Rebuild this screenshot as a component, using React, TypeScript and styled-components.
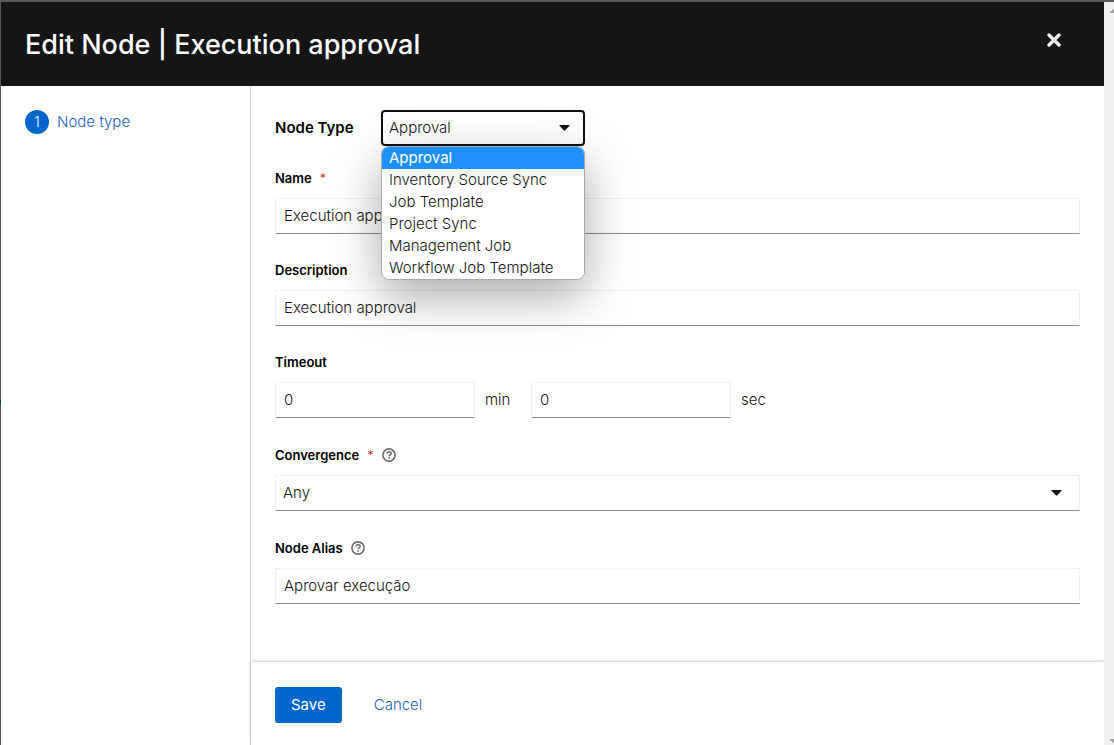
import React, { useState } from "react";
import styled, { createGlobalStyle } from "styled-components";

const GlobalStyle = createGlobalStyle`
  *, *::before, *::after { box-sizing: border-box; }
  body {
    margin: 0;
    background: #fff;
    color: #151515;
    font-family: Inter, "Liberation Sans", sans-serif;
    font-size: 15px;
    font-weight: 300;
    line-height: 24px;
  }
  button, input, select { font: inherit; color: inherit; }
`;

const Page = styled.div`
  display: flex;
  min-height: 100vh;
  border-top: 2px solid #58595a;
  border-left: 1px solid #58595a;
`;

const Wizard = styled.div`
  flex: 1;
  min-width: 0;
  display: flex;
  flex-direction: column;
`;

const Header = styled.header`
  display: flex;
  justify-content: space-between;
  align-items: flex-start;
  padding: 24px 24px 22px;
  background: #151515;
  color: #fff;
`;

const Title = styled.h1`
  margin: 0;
  font-size: 27px;
  font-weight: 500;
  line-height: 38px;
`;

const CloseButton = styled.button`
  display: flex;
  align-items: center;
  justify-content: center;
  width: 52px;
  height: 28px;
  padding: 0;
  border: 0;
  background: none;
  color: #f0f0f0;
`;

const Body = styled.div`
  flex: 1;
  display: flex;
`;

const Steps = styled.nav`
  flex: 0 0 250px;
  padding: 24px;
  border-right: 1px solid #d2d2d2;
`;

const StepList = styled.ol`
  margin: 0;
  padding: 0;
  list-style: none;
`;

const StepLink = styled.a`
  display: flex;
  align-items: center;
  gap: 8px;
  color: #1a5fc8;
  text-decoration: none;
`;

const StepNumber = styled.span`
  width: 24px;
  height: 24px;
  border-radius: 50%;
  background: #06c;
  color: #fff;
  font-size: 14px;
  text-align: center;
`;

const Form = styled.form`
  flex: 1;
  min-width: 0;
  display: flex;
  flex-direction: column;
`;

const Fields = styled.div`
  flex: 1;
  padding: 24px 24px 58px;
  display: flex;
  flex-direction: column;
  gap: 26px;
`;

const TypeRow = styled.div`
  display: flex;
  align-items: center;
  margin-bottom: -4px;
`;

const TypeLabel = styled.label`
  width: 106px;
  color: #000;
  font-weight: 600;
`;

const TypePicker = styled.div`
  position: relative;
  width: 204px;
`;

const SelectBox = styled.div`
  position: relative;
`;

const Select = styled.select<{ $open?: boolean }>`
  display: block;
  width: 100%;
  height: 36px;
  padding: 0 24px 0 ${(p) => (p.$open ? 6 : 7)}px;
  appearance: none;
  background: #fff;
  outline: 0;
  border: 1px solid #f0f0f0;
  border-bottom-color: #8a8d90;
  ${(p) => p.$open && "border: 2px solid #101010; border-radius: 4px;"}
`;

const Caret = styled.svg<{ $inset: number }>`
  position: absolute;
  top: 15px;
  right: ${(p) => p.$inset}px;
  width: 11px;
  height: 6px;
  pointer-events: none;
`;

const Options = styled.ul`
  position: absolute;
  z-index: 1;
  top: 36px;
  left: 0;
  width: 100%;
  margin: 0;
  padding: 0;
  overflow: hidden;
  list-style: none;
  line-height: 22px;
  background: #fff;
  border: 1px solid #a9a9a9;
  border-radius: 8px;
  box-shadow: 0 16px 48px rgba(0, 0, 0, 0.34);
`;

const Option = styled.li<{ $active: boolean }>`
  padding: 0 7px;
  white-space: nowrap;
  background: ${(p) => (p.$active ? "#1e90ff" : "#fff")};
  color: ${(p) => (p.$active ? "#fff" : "#151515")};
  font-weight: ${(p) => (p.$active ? 400 : 300)};
`;

const Group = styled.div`
  display: flex;
  flex-direction: column;
  gap: 10px;
`;

const LabelRow = styled.div<{ $help?: boolean }>`
  display: flex;
  align-items: center;
  gap: 8px;
  height: ${(p) => (p.$help ? 21 : 20)}px;
  color: #000;
  font-size: 13px;
  font-weight: 600;
`;

const Required = styled.span`
  color: #c9190b;
  font-weight: 300;
`;

const HelpButton = styled.button`
  display: flex;
  padding: 0;
  border: 0;
  background: none;
  color: #6a6e73;
`;

const TextInput = styled.input`
  display: block;
  width: 100%;
  height: 36px;
  padding: 0 8px 2px;
  outline: 0;
  background: #fff;
  border: 1px solid #f0f0f0;
  border-bottom-color: #8a8d90;
  border-radius: 0;
`;

const TimeoutRow = styled.div`
  display: flex;
  align-items: center;
`;

const TimeInput = styled(TextInput)`
  width: 200px;
`;

const Unit = styled.span`
  width: 56px;
  padding-left: 10px;
`;

const Footer = styled.footer`
  display: flex;
  align-items: center;
  gap: 16px;
  padding: 25px 24px 22px;
  box-shadow: 0 -1px 3px rgba(3, 3, 3, 0.2);
`;

const Button = styled.button<{ $primary?: boolean }>`
  height: 36px;
  padding: 0 16px;
  border: 0;
  border-radius: 3px;
  background: ${(p) => (p.$primary ? "#06c" : "transparent")};
  color: ${(p) => (p.$primary ? "#fff" : "#1a5fc8")};
  font-weight: ${(p) => (p.$primary ? 400 : 300)};
`;

const ScrollRail = styled.div`
  position: relative;
  display: flex;
  flex-direction: column;
  justify-content: space-between;
  align-items: flex-end;
  width: 10px;
  padding: 7px 0 2px;
  background: #f0f0f0;
`;

const EdgeMark = styled.span`
  position: absolute;
  top: 400px;
  left: 0;
  width: 1px;
  height: 4px;
  background: #123f73;
`;

const nodeTypes = [
  "Approval",
  "Inventory Source Sync",
  "Job Template",
  "Project Sync",
  "Management Job",
  "Workflow Job Template",
];

function DownCaret({ inset }: { inset: number }) {
  return (
    <Caret $inset={inset} viewBox="0 0 11 6" aria-hidden="true">
      <path d="M1 0h9q1 0 .5.8L6.5 5q-1 1-2 0L.5.8Q0 0 1 0Z" fill="#151515" />
    </Caret>
  );
}

function Help({ label }: { label: string }) {
  return (
    <HelpButton type="button" aria-label={label}>
      <svg width="14" height="14" viewBox="0 0 14 14" fill="none" stroke="currentColor">
        <circle cx="7" cy="7" r="6.1" strokeWidth="1.6" />
        <path d="M4.9 5.5C5.2 4.4 6 3.8 7.1 3.8c1.2 0 2.1.7 2.1 1.7C9.2 6.9 7.2 6.8 7.2 8.3" strokeWidth="1.5" />
        <circle cx="7.1" cy="10" r=".9" fill="currentColor" stroke="none" />
      </svg>
    </HelpButton>
  );
}

export default function App() {
  const [type, setType] = useState(nodeTypes[0]);

  return (
    <>
      <GlobalStyle />
      <Page>
        <EdgeMark />
        <Wizard>
          <Header>
            <Title>Edit Node | Execution approval</Title>
            <CloseButton type="button" aria-label="Close">
              <svg width="14" height="14" viewBox="0 0 14 14">
                <path d="M2 2l10 10M12 2L2 12" stroke="currentColor" strokeWidth="3.4" strokeLinecap="round" />
              </svg>
            </CloseButton>
          </Header>
          <Body>
            <Steps aria-label="Wizard steps">
              <StepList>
                <li>
                  <StepLink href="#node-type" aria-current="step">
                    <StepNumber>1</StepNumber>
                    Node type
                  </StepLink>
                </li>
              </StepList>
            </Steps>
            <Form onSubmit={(e) => e.preventDefault()}>
              <Fields>
                <TypeRow>
                  <TypeLabel htmlFor="node-type">Node Type</TypeLabel>
                  <TypePicker>
                    <Select id="node-type" $open value={type} onChange={(e) => setType(e.target.value)}>
                      {nodeTypes.map((t) => (
                        <option key={t}>{t}</option>
                      ))}
                    </Select>
                    <DownCaret inset={15} />
                    <Options role="listbox" aria-label="Node Type">
                      {nodeTypes.map((t) => (
                        <Option key={t} role="option" aria-selected={t === type} $active={t === type} onClick={() => setType(t)}>
                          {t}
                        </Option>
                      ))}
                    </Options>
                  </TypePicker>
                </TypeRow>
                <Group>
                  <LabelRow>
                    <label htmlFor="name">Name</label>
                    <Required aria-hidden="true">*</Required>
                  </LabelRow>
                  <TextInput id="name" required defaultValue="Execution approval" />
                </Group>
                <Group>
                  <LabelRow>
                    <label htmlFor="description">Description</label>
                  </LabelRow>
                  <TextInput id="description" defaultValue="Execution approval" />
                </Group>
                <Group>
                  <LabelRow>
                    <label htmlFor="timeout-minutes">Timeout</label>
                  </LabelRow>
                  <TimeoutRow>
                    <TimeInput id="timeout-minutes" inputMode="numeric" defaultValue="0" />
                    <Unit>min</Unit>
                    <TimeInput aria-label="Timeout seconds" inputMode="numeric" defaultValue="0" />
                    <Unit>sec</Unit>
                  </TimeoutRow>
                </Group>
                <Group>
                  <LabelRow $help>
                    <label htmlFor="convergence">Convergence</label>
                    <Required aria-hidden="true">*</Required>
                    <Help label="More information for Convergence" />
                  </LabelRow>
                  <SelectBox>
                    <Select id="convergence" defaultValue="Any">
                      <option>Any</option>
                      <option>All</option>
                    </Select>
                    <DownCaret inset={18} />
                  </SelectBox>
                </Group>
                <Group>
                  <LabelRow $help>
                    <label htmlFor="alias">Node Alias</label>
                    <Help label="More information for Node Alias" />
                  </LabelRow>
                  <TextInput id="alias" defaultValue="Aprovar execução" />
                </Group>
              </Fields>
              <Footer>
                <Button type="submit" $primary>Save</Button>
                <Button type="button">Cancel</Button>
              </Footer>
            </Form>
          </Body>
        </Wizard>
        <ScrollRail aria-hidden="true">
          <svg width="5" height="4" viewBox="0 0 5 4">
            <path d="M0 4L4 0L5 1V4Z" fill="#a3a3a3" />
          </svg>
          <svg width="5" height="4" viewBox="0 0 5 4">
            <path d="M0 0L4 4L5 3V0Z" fill="#a3a3a3" />
          </svg>
        </ScrollRail>
      </Page>
    </>
  );
}
